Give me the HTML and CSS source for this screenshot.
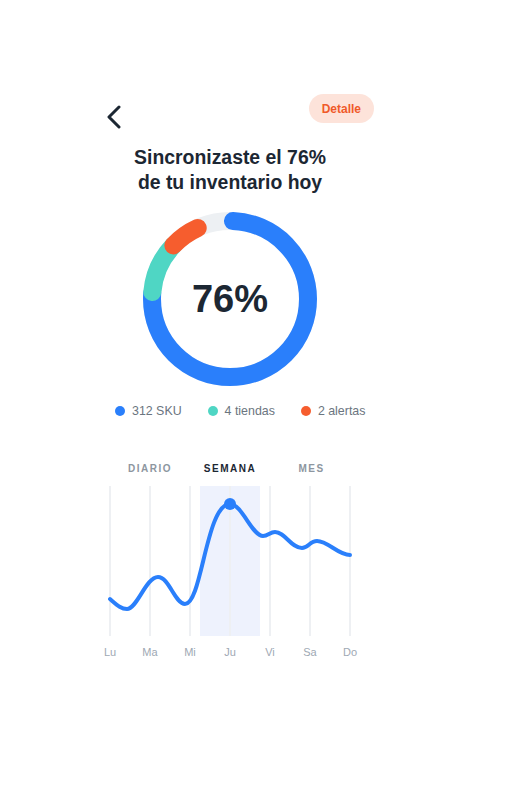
FILE: index.html
```html
<!DOCTYPE html>
<html lang="es">
<head>
  <meta charset="UTF-8">
  <meta name="viewport" content="width=device-width, initial-scale=1.0">
  <title>Inventario</title>
  <link rel="stylesheet" href="styles.css">
</head>
<body>
  <div class="screen">
    <div class="header">
      <button class="back" type="button" aria-label="Volver">
        <svg width="16" height="24" viewBox="0 0 16 24">
          <path d="M13 2 L3 12 L13 22" fill="none" stroke="#1c2733" stroke-width="3" stroke-linecap="round" stroke-linejoin="round"/>
        </svg>
      </button>
      <button class="detail" type="button">Detalle</button>
    </div>

    <h1 class="title">Sincronizaste el 76%<br>de tu inventario hoy</h1>

    <div class="donut">
      <svg width="180" height="180" viewBox="0 0 180 180">
        <!-- r=78, circunferencia ~490.1 -->
        <g transform="rotate(-90 90 90)" fill="none" stroke-width="18" stroke-linecap="round">
          <circle cx="90" cy="90" r="78" stroke="#edf0f3"/>
          <circle cx="90" cy="90" r="78" stroke="#2a7ffb" stroke-dasharray="370 500" stroke-dashoffset="-3"/>
          <circle cx="90" cy="90" r="78" stroke="#4fd6c4" stroke-dasharray="52 500" stroke-dashoffset="-374"/>
          <circle cx="90" cy="90" r="78" stroke="#f65d2e" stroke-dasharray="30 500" stroke-dashoffset="-426"/>
        </g>
      </svg>
      <div class="donut-value">76%</div>
    </div>

    <div class="legend">
      <div class="legend-item"><span class="dot dot-blue"></span>312 SKU</div>
      <div class="legend-item"><span class="dot dot-teal"></span>4 tiendas</div>
      <div class="legend-item"><span class="dot dot-orange"></span>2 alertas</div>
    </div>

    <div class="tabs">
      <div class="tab">DIARIO</div>
      <div class="tab active">SEMANA</div>
      <div class="tab">MES</div>
    </div>

    <div class="chart">
      <svg width="280" height="150" viewBox="0 0 280 150">
        <rect x="110" y="0" width="60" height="150" fill="#eef2fd"/>
        <g stroke="#eef0f3" stroke-width="2">
          <line x1="20" y1="0" x2="20" y2="150"/>
          <line x1="60" y1="0" x2="60" y2="150"/>
          <line x1="100" y1="0" x2="100" y2="150"/>
          <line x1="140" y1="0" x2="140" y2="150"/>
          <line x1="180" y1="0" x2="180" y2="150"/>
          <line x1="220" y1="0" x2="220" y2="150"/>
          <line x1="260" y1="0" x2="260" y2="150"/>
        </g>
        <path d="M20 113 C27 119, 31 123, 37 123 C47 123, 56 91, 68 91 C79 91, 85 118, 95 118 C112 118, 116 18, 140 18 C152 18, 162 50, 173 50 C178 50, 180 46, 185 46 C195 46, 201 62, 212 62 C218 62, 220 55, 227 55 C238 55, 248 69, 260 69"
              fill="none" stroke="#2a7ffb" stroke-width="4" stroke-linecap="round"/>
        <circle cx="140" cy="18" r="6" fill="#2a7ffb"/>
      </svg>
      <div class="days">
        <span>Lu</span><span>Ma</span><span>Mi</span><span>Ju</span><span>Vi</span><span>Sa</span><span>Do</span>
      </div>
    </div>
  </div>
</body>
</html>
```

FILE: styles.css
```css
body {
  margin: 0;
  background: #fff;
  font-family: "Liberation Sans", Arial, sans-serif;
  color: #1c2733;
}
.screen {
  width: 300px;
  margin-left: 80px;
  padding-top: 94px;
}
.header {
  display: flex;
  justify-content: space-between;
  align-items: flex-start;
  padding: 0 6px 0 26px;
}
.back {
  margin-top: 11px;
  padding: 0;
  border: none;
  background: none;
  width: 16px;
  height: 24px;
  cursor: pointer;
}
.back svg {
  display: block;
}
.detail {
  height: 29px;
  padding: 0 13px;
  border: none;
  border-radius: 15px;
  background: #fde3da;
  color: #f05a2a;
  font-family: inherit;
  font-size: 12px;
  font-weight: bold;
  cursor: pointer;
}
.title {
  margin: 16px 0 0;
  text-align: center;
  font-size: 19.4px;
  line-height: 25px;
  font-weight: bold;
  color: #1c2733;
}
.donut {
  position: relative;
  width: 180px;
  height: 180px;
  margin: 14px auto 0;
}
.donut svg {
  display: block;
}
.donut-value {
  position: absolute;
  inset: 0;
  display: flex;
  align-items: center;
  justify-content: center;
  font-size: 38px;
  font-weight: bold;
  color: #1c2733;
}
.legend {
  display: flex;
  gap: 26px;
  padding-left: 35px;
  margin-top: 15px;
}
.legend-item {
  display: flex;
  align-items: center;
  gap: 7px;
  font-size: 12.4px;
  color: #6b7580;
}
.dot {
  width: 10px;
  height: 10px;
  border-radius: 50%;
}
.dot-blue { background: #2a7ffb; }
.dot-teal { background: #4fd6c4; }
.dot-orange { background: #f65d2e; }
.tabs {
  display: grid;
  grid-template-columns: repeat(3, 80px);
  justify-content: center;
  margin-top: 45px;
}
.tab {
  text-align: center;
  font-size: 10px;
  font-weight: bold;
  letter-spacing: 1.5px;
  color: #8d96a0;
}
.tab:last-child {
  padding-left: 3px;
}
.tab.active {
  color: #1c2733;
}
.chart {
  width: 280px;
  margin: 12px auto 0;
}
.chart svg {
  display: block;
}
.days {
  display: grid;
  grid-template-columns: repeat(7, 40px);
  margin-top: 10px;
  font-size: 11px;
  color: #9ea8b3;
  text-align: center;
}
```
